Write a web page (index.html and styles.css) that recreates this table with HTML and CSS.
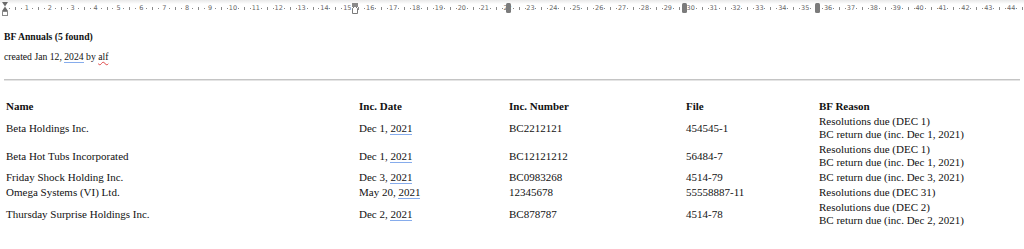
FILE: index.html
```html
<!DOCTYPE html>
<html>
<head>
<meta charset="utf-8">
<link rel="stylesheet" href="styles.css">
</head>
<body>
<div class="ruler">
  <div class="track">
    <span class="seg"><i class="d"></i><i class="t"></i><i class="d"></i></span><span class="num"><b>1</b></span>
    <span class="seg"><i class="d"></i><i class="t"></i><i class="d"></i></span><span class="num"><b>2</b></span>
    <span class="seg"><i class="d"></i><i class="t"></i><i class="d"></i></span><span class="num"><b>3</b></span>
    <span class="seg"><i class="d"></i><i class="t"></i><i class="d"></i></span><span class="num"><b>4</b></span>
    <span class="seg"><i class="d"></i><i class="t"></i><i class="d"></i></span><span class="num"><b>5</b></span>
    <span class="seg"><i class="d"></i><i class="t"></i><i class="d"></i></span><span class="num"><b>6</b></span>
    <span class="seg"><i class="d"></i><i class="t"></i><i class="d"></i></span><span class="num"><b>7</b></span>
    <span class="seg"><i class="d"></i><i class="t"></i><i class="d"></i></span><span class="num"><b>8</b></span>
    <span class="seg"><i class="d"></i><i class="t"></i><i class="d"></i></span><span class="num"><b>9</b></span>
    <span class="seg"><i class="d"></i><i class="t"></i><i class="d"></i></span><span class="num"><b>10</b></span>
    <span class="seg"><i class="d"></i><i class="t"></i><i class="d"></i></span><span class="num"><b>11</b></span>
    <span class="seg"><i class="d"></i><i class="t"></i><i class="d"></i></span><span class="num"><b>12</b></span>
    <span class="seg"><i class="d"></i><i class="t"></i><i class="d"></i></span><span class="num"><b>13</b></span>
    <span class="seg"><i class="d"></i><i class="t"></i><i class="d"></i></span><span class="num"><b>14</b></span>
    <span class="seg"><i class="d"></i><i class="t"></i><i class="d"></i></span><span class="num"><b>15</b></span>
    <span class="seg"><i class="d"></i><i class="t"></i><i class="d"></i></span><span class="num"><b>16</b></span>
    <span class="seg"><i class="d"></i><i class="t"></i><i class="d"></i></span><span class="num"><b>17</b></span>
    <span class="seg"><i class="d"></i><i class="t"></i><i class="d"></i></span><span class="num"><b>18</b></span>
    <span class="seg"><i class="d"></i><i class="t"></i><i class="d"></i></span><span class="num"><b>19</b></span>
    <span class="seg"><i class="d"></i><i class="t"></i><i class="d"></i></span><span class="num"><b>20</b></span>
    <span class="seg"><i class="d"></i><i class="t"></i><i class="d"></i></span><span class="num"><b>21</b></span>
    <span class="seg"><i class="d"></i><i class="t"></i><i class="d"></i></span><span class="num"><b>22</b></span>
    <span class="seg"><i class="d"></i><i class="t"></i><i class="d"></i></span><span class="num"><b>23</b></span>
    <span class="seg"><i class="d"></i><i class="t"></i><i class="d"></i></span><span class="num"><b>24</b></span>
    <span class="seg"><i class="d"></i><i class="t"></i><i class="d"></i></span><span class="num"><b>25</b></span>
    <span class="seg"><i class="d"></i><i class="t"></i><i class="d"></i></span><span class="num"><b>26</b></span>
    <span class="seg"><i class="d"></i><i class="t"></i><i class="d"></i></span><span class="num"><b>27</b></span>
    <span class="seg"><i class="d"></i><i class="t"></i><i class="d"></i></span><span class="num"><b>28</b></span>
    <span class="seg"><i class="d"></i><i class="t"></i><i class="d"></i></span><span class="num"><b>29</b></span>
    <span class="seg"><i class="d"></i><i class="t"></i><i class="d"></i></span><span class="num"><b>30</b></span>
    <span class="seg"><i class="d"></i><i class="t"></i><i class="d"></i></span><span class="num"><b>31</b></span>
    <span class="seg"><i class="d"></i><i class="t"></i><i class="d"></i></span><span class="num"><b>32</b></span>
    <span class="seg"><i class="d"></i><i class="t"></i><i class="d"></i></span><span class="num"><b>33</b></span>
    <span class="seg"><i class="d"></i><i class="t"></i><i class="d"></i></span><span class="num"><b>34</b></span>
    <span class="seg"><i class="d"></i><i class="t"></i><i class="d"></i></span><span class="num"><b>35</b></span>
    <span class="seg"><i class="d"></i><i class="t"></i><i class="d"></i></span><span class="num"><b>36</b></span>
    <span class="seg"><i class="d"></i><i class="t"></i><i class="d"></i></span><span class="num"><b>37</b></span>
    <span class="seg"><i class="d"></i><i class="t"></i><i class="d"></i></span><span class="num"><b>38</b></span>
    <span class="seg"><i class="d"></i><i class="t"></i><i class="d"></i></span><span class="num"><b>39</b></span>
    <span class="seg"><i class="d"></i><i class="t"></i><i class="d"></i></span><span class="num"><b>40</b></span>
    <span class="seg"><i class="d"></i><i class="t"></i><i class="d"></i></span><span class="num"><b>41</b></span>
    <span class="seg"><i class="d"></i><i class="t"></i><i class="d"></i></span><span class="num"><b>42</b></span>
    <span class="seg"><i class="d"></i><i class="t"></i><i class="d"></i></span><span class="num"><b>43</b></span>
    <span class="seg"><i class="d"></i><i class="t"></i><i class="d"></i></span><span class="num"><b>44</b></span>
    <span class="seg"><i class="d"></i><i class="t"></i><i class="d"></i></span>
  </div>
  <svg class="mk mk-indent" width="8" height="16" viewBox="0 0 8 16">
    <path d="M1 2 H7 L4 6.5 Z" fill="#6b6b6b"/>
    <path d="M4 6.5 L7 11 H1 Z" fill="#6b6b6b"/>
    <rect x="1.5" y="11.5" width="5" height="4" fill="#fff" stroke="#8a8a8a" stroke-width="1"/>
  </svg>
  <svg class="mk mk-tab" width="8" height="16" viewBox="0 0 8 16">
    <path d="M1.5 8.5 L4 6 L6.5 8.5 V13.5 H1.5 Z" fill="#fff" stroke="#7a7a7a" stroke-width="1"/>
    <rect x="1" y="3" width="6" height="4" fill="#8a8a8a"/>
  </svg>
  <span class="mk mk-col c1"></span>
  <span class="mk mk-col c2"></span>
  <span class="mk mk-col c3"></span>
</div>

<main class="doc">
  <h1 class="title">BF Annuals (5 found)</h1>
  <p class="meta">created Jan 12, <span class="gram">2024</span> by <span class="spell">alf</span></p>
  <hr class="rule">

  <table class="bf">
    <colgroup>
      <col class="w-name">
      <col class="w-date">
      <col class="w-num">
      <col class="w-file">
      <col class="w-reason">
    </colgroup>
    <thead>
      <tr>
        <th>Name</th>
        <th>Inc. Date</th>
        <th>Inc. Number</th>
        <th>File</th>
        <th>BF Reason</th>
      </tr>
    </thead>
    <tbody>
      <tr>
        <td>Beta Holdings Inc.</td>
        <td>Dec 1, <span class="gram">2021</span></td>
        <td>BC2212121</td>
        <td>454545-1</td>
        <td>Resolutions due (DEC 1)<br>BC return due (inc. Dec 1, 2021)</td>
      </tr>
      <tr>
        <td>Beta Hot Tubs Incorporated</td>
        <td>Dec 1, <span class="gram">2021</span></td>
        <td>BC12121212</td>
        <td>56484-7</td>
        <td>Resolutions due (DEC 1)<br>BC return due (inc. Dec 1, 2021)</td>
      </tr>
      <tr>
        <td>Friday Shock Holding Inc.</td>
        <td>Dec 3, <span class="gram">2021</span></td>
        <td>BC0983268</td>
        <td>4514-79</td>
        <td>BC return due (inc. Dec 3, 2021)</td>
      </tr>
      <tr>
        <td>Omega Systems (VI) Ltd.</td>
        <td>May 20, <span class="gram">2021</span></td>
        <td>12345678</td>
        <td>55558887-11</td>
        <td>Resolutions due (DEC 31)</td>
      </tr>
      <tr>
        <td>Thursday Surprise Holdings Inc.</td>
        <td>Dec 2, <span class="gram">2021</span></td>
        <td>BC878787</td>
        <td>4514-78</td>
        <td>Resolutions due (DEC 2)<br>BC return due (inc. Dec 2, 2021)</td>
      </tr>
    </tbody>
  </table>
</main>
</body>
</html>
```

FILE: styles.css
```css
html, body {
  margin: 0;
  padding: 0;
  background: #ffffff;
}

body {
  font-family: "Liberation Serif", "Times New Roman", serif;
  color: #111111;
  width: 1024px;
  overflow: hidden;
}

/* ---------- ruler ---------- */
.ruler {
  position: relative;
  height: 16px;
  background: linear-gradient(#e9e9e9 0, #f4f4f4 2px, #ffffff 4px);
}

.track {
  display: flex;
  align-items: center;
  height: 16px;
  padding-left: 4px;
  font-family: "DejaVu Sans", "Liberation Sans", sans-serif;
  font-size: 6.5px;
  color: #666666;
}

.seg {
  flex: 0 0 22.9px;
  width: 22.9px;
  display: flex;
  justify-content: space-evenly;
  align-items: center;
}

.seg .d {
  display: block;
  width: 1px;
  height: 1px;
  background: #8a8a8a;
}

.seg .t {
  display: block;
  width: 1px;
  height: 3px;
  background: #8a8a8a;
}

.num {
  flex: 0 0 0;
  width: 0;
  display: flex;
  justify-content: center;
}

.num b {
  font-weight: normal;
  white-space: nowrap;
}

.mk {
  position: absolute;
  top: 0;
}

.mk-indent { left: 1px; }
.mk-tab { left: 351px; }

.mk-col {
  top: 3px;
  width: 5px;
  height: 10px;
  border-radius: 1.5px;
  background: #7b7b7b;
}

.mk-col.c1 { left: 506px; }
.mk-col.c2 { left: 682px; }
.mk-col.c3 { left: 815px; }

/* ---------- document ---------- */
.doc {
  padding: 0 4px;
}

.title {
  margin: 15px 0 0;
  font-size: 9.7px;
  line-height: 12px;
  font-weight: bold;
}

.meta {
  margin: 8px 0 0;
  font-size: 9.7px;
  line-height: 12px;
}

.gram {
  display: inline-block;
  line-height: 11px;
  border-bottom: 1px solid #86acec;
}

.spell {
  text-decoration: underline wavy;
  text-decoration-color: #e04848;
  text-decoration-thickness: 1px;
  text-underline-offset: 1px;
}

.rule {
  margin: 16px 0 0;
  height: 0;
  border: 0;
  border-top: 1px solid #c4c4c4;
  border-bottom: 1px solid #e4e4e4;
}

.bf {
  margin-top: 18px;
  border-collapse: collapse;
  table-layout: fixed;
  width: 1016px;
  font-size: 11px;
  line-height: 13px;
}

.w-name { width: 353px; }
.w-date { width: 150px; }
.w-num { width: 177px; }
.w-file { width: 133px; }
.w-reason { width: 203px; }

.bf th,
.bf td {
  padding: 1px 2px;
  text-align: left;
  vertical-align: middle;
  white-space: nowrap;
}

.bf th {
  font-weight: bold;
}
```
